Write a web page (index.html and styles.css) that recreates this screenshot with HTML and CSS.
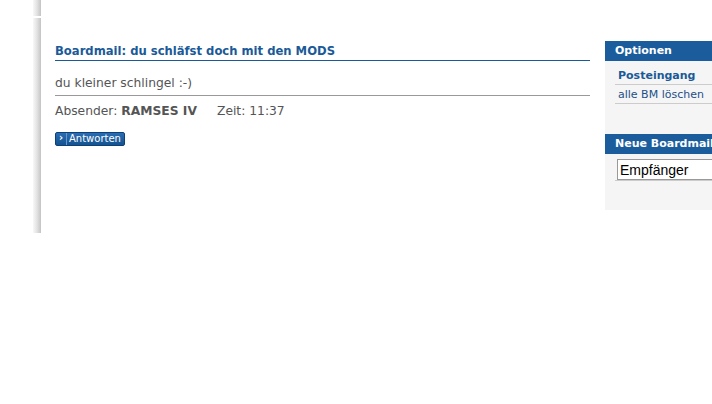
FILE: index.html
```html
<!DOCTYPE html>
<html lang="de">
<head>
  <meta charset="UTF-8">
  <title>Boardmail</title>
  <link rel="stylesheet" href="styles.css">
</head>
<body>
  <div class="page">
    <div class="topbar"></div>
    <div class="main">
      <div class="content">
        <h2 class="mail-title">Boardmail: du schläfst doch mit den MODS</h2>
        <p class="mail-text">du kleiner schlingel :-)</p>
        <div class="mail-meta">
          <span>Absender: <b>RAMSES IV</b></span>
          <span>Zeit: 11:37</span>
        </div>
        <button class="btn" type="button"><span class="btn-arrow">›</span><span class="btn-label">Antworten</span></button>
      </div>

      <div class="sidebar">
        <div class="box">
          <div class="box-head">Optionen</div>
          <ul class="box-links">
            <li><a href="#" class="active">Posteingang</a></li>
            <li><a href="#">alle BM löschen</a></li>
          </ul>
        </div>
        <div class="box">
          <div class="box-head">Neue Boardmail</div>
          <div class="box-form">
            <input type="text" value="Empfänger">
          </div>
        </div>
      </div>
    </div>
  </div>
</body>
</html>
```

FILE: styles.css
```css
body {
  margin: 0;
  background: #fff;
  overflow: hidden;
  font-family: "DejaVu Sans", Verdana, sans-serif;
}

.page {
  width: 712px;
  margin-left: 33px;
  overflow: hidden;
}

/* left edge shadow */
.topbar,
.main {
  background: linear-gradient(90deg, #f8f8f8 0, #e2e2e2 4px, #c4c4c4 8px, #fff 8px);
}

.topbar {
  height: 16px;
  margin-bottom: 2px;
}

.main {
  display: flex;
  align-items: flex-start;
  gap: 15px;
  height: 192px;
  padding: 23px 0 0 22px;
}

.content {
  flex: none;
  width: 535px;
  padding-top: 3px;
}

.mail-title {
  margin: 0;
  padding: 0 0 1px;
  font-size: 11.6px;
  font-weight: bold;
  color: #1b5a98;
  border-bottom: 1px solid #1b5a98;
  line-height: 15px;
}

.mail-text {
  margin: 0;
  padding: 15px 0 4px;
  font-size: 12.3px;
  line-height: 15px;
  color: #555;
  border-bottom: 1px solid #999;
}

.mail-meta {
  display: flex;
  gap: 20px;
  padding: 8px 0 0;
  font-size: 12.3px;
  line-height: 15px;
  color: #555;
}

.btn {
  display: flex;
  align-items: stretch;
  margin-top: 13px;
  padding: 0;
  height: 14px;
  border: 1px solid #0d3f78;
  border-radius: 2px;
  background: linear-gradient(#2a6db4, #14538f);
  color: #fff;
  font-family: "DejaVu Sans", Verdana, sans-serif;
  cursor: pointer;
}

.btn-arrow {
  width: 10px;
  font-size: 10px;
  line-height: 10px;
  font-weight: bold;
  text-align: center;
  border-right: 1px solid #6a98c8;
}

.btn-label {
  padding: 0 3px 0 2px;
  font-size: 10px;
  line-height: 12px;
}

.sidebar {
  flex: none;
  width: 180px;
  height: 169px;
  background: #f5f5f5;
}

.box-head {
  height: 20px;
  padding-left: 10px;
  background: #1b5d9c;
  color: #fff;
  font-size: 11px;
  font-weight: bold;
  line-height: 20px;
}

.box-links {
  box-sizing: border-box;
  list-style: none;
  margin: 0;
  padding: 5px 0 0 10px;
  height: 73px;
}

.box-links li {
  border-bottom: 1px solid #ccc;
}

.box-links a {
  display: block;
  padding: 3px 3px 2px;
  font-size: 11px;
  line-height: 13px;
  color: #1e4f88;
  text-decoration: none;
}

.box-links a.active {
  font-weight: bold;
  color: #1b5a98;
}

.box-form {
  margin: 5px 0 0 10px;
  padding: 0 0 0 2px;
  border-bottom: 1px solid #ccc;
}

.box-form input {
  display: block;
  box-sizing: border-box;
  width: 170px;
  height: 21px;
  margin: 0;
  padding: 0 2px;
  border: 1px solid #999;
  background: #fff;
  font-family: "Liberation Sans", Arial, sans-serif;
  font-size: 14px;
  color: #000;
}
```
